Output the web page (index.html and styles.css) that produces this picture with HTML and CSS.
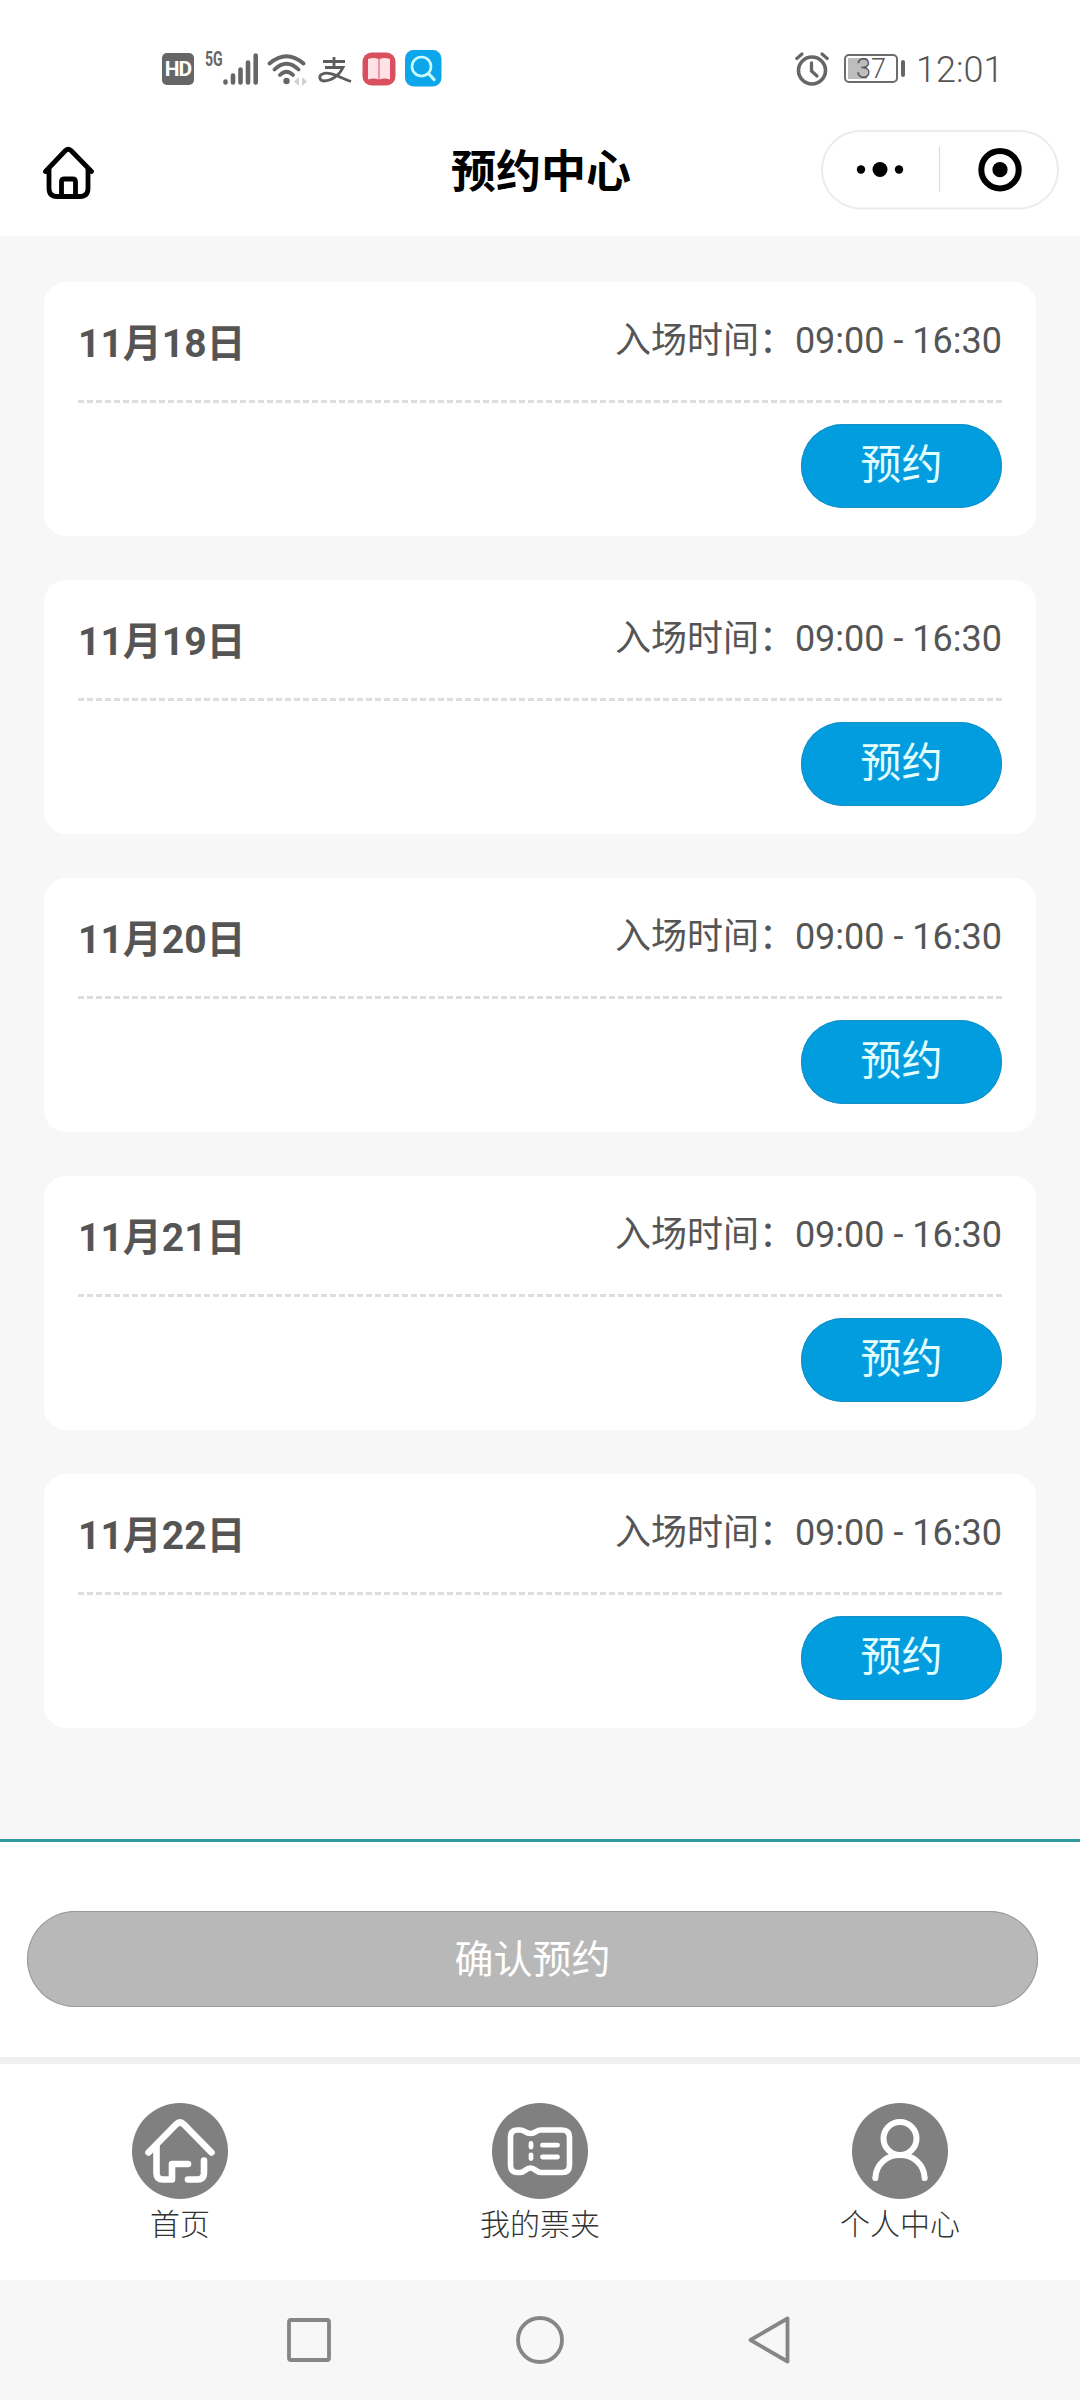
FILE: index.html
```html
<!DOCTYPE html>
<html lang="zh-CN">
<head>
<meta charset="utf-8">
<title>预约中心</title>
<link rel="stylesheet" href="styles.css">
</head>
<body>
<div class="statusbar">
  <div class="status-left">
    <span class="hd">HD</span>
    <span class="net">5G</span>
    <svg class="signal" width="36" height="36" viewBox="18 0 36 36">
      <g stroke="#666" stroke-width="4.600" stroke-linecap="round"><path d="M20.500 31.500v1M28 25.500v7M35.500 19.500v13M43 12.500v20M50.700 5.500v27"/></g>
    </svg>
    <svg class="wifi" width="40" height="36" viewBox="0 0 40 36">
      <g fill="none" stroke="#666" stroke-width="3.800" stroke-linecap="round"><path d="M2.500 13.500Q19.500-1 36.500 13.500M7.500 19.500Q19.500 8 31.500 19.500M13 25Q19.500 18.500 26 25"/></g>
      <circle cx="19.500" cy="31" r="3.200" fill="#666"/>
      <path d="M32 27v9l-5-4.500zM35 27v9l5-4.500z" fill="#d2d2d2"/>
    </svg>
    <svg class="pay" width="34" height="36" viewBox="0 0 34 36">
      <path d="M5 11.500H27M16 7V17M7 17.500H25C21 26 13 31 6 31C1 31 .5 25.500 4.500 24C11 21 21 27 33 31.500" fill="none" stroke="#5c5c5c" stroke-width="2.800"/>
    </svg>
    <svg class="book" width="34" height="36" viewBox="0 0 34 36">
      <rect x="0.500" y="2.500" width="33" height="33" rx="9" fill="#d94f5d"/>
      <path d="M6 9Q12 7 16.500 9V29.500Q12 27.500 6 29.500ZM17.500 9Q22 7 28 9V29.500Q22 27.500 17.500 29.500Z" fill="#ffe2e5"/>
    </svg>
    <svg class="search" width="37" height="37" viewBox="0 0 37 37">
      <rect x="0" y="0" width="36.500" height="36.500" rx="8.500" fill="#0ea6ea"/>
      <circle cx="16.500" cy="16.500" r="9.500" fill="none" stroke="#c9fbff" stroke-width="2.600"/>
      <path d="M23.500 23.500L29 29.500" stroke="#c9fbff" stroke-width="3.200" stroke-linecap="round"/>
    </svg>
  </div>
  <div class="status-right">
    <svg width="34" height="34" viewBox="0 0 34 34" fill="none" stroke="#666" stroke-linecap="round">
      <circle cx="17" cy="18.500" r="13.500" stroke-width="3.600"/>
      <path d="M16.500 11v8l5.500 5" stroke-width="3.300"/>
      <path d="M1.800 6.500L7 2M27 2l5.200 4.500" stroke-width="3.200"/>
    </svg>
    <div class="battery"><span class="cell">37</span><span class="nub"></span></div>
    <span class="clock">12:01</span>
  </div>
</div>

<header class="header">
  <svg class="home" width="52" height="54" viewBox="0 0 52 54" fill="none" stroke="#000" stroke-width="4.800" stroke-linecap="round" stroke-linejoin="round">
    <path d="M2.500 25.500L22.500 4.500Q25.200 2 28 4.500L48.500 25.500"/>
    <path d="M6 23V42Q6 50.500 14 50.500H37Q45 50.500 45 42V23M18.500 50V36Q18.500 33 21.500 33H29.500Q32.500 33 32.500 36V50"/>
  </svg>
  <h1 class="title">预约中心</h1>
  <svg class="capsule" width="238" height="80" viewBox="0 0 238 80">
    <rect x="1" y="1" width="236" height="77.500" rx="38.700" fill="#fff" stroke="#ececec" stroke-width="2"/>
    <path d="M118.500 17V62" stroke="#dcdcdc" stroke-width="1.200"/>
    <circle cx="40" cy="39.500" r="4.200"/><circle cx="59" cy="39.500" r="7.500"/><circle cx="78" cy="39.500" r="4.200"/>
    <circle cx="179" cy="39.700" r="18.700" fill="none" stroke="#000" stroke-width="6"/><circle cx="179" cy="39.700" r="7.600"/>
  </svg>
</header>

<main class="list">
  <section class="card">
    <div class="info"><h2 class="date">11月18日</h2><p class="time">入场时间：09:00 - 16:30</p></div>
    <button class="book-btn">预约</button>
  </section>
  <section class="card">
    <div class="info"><h2 class="date">11月19日</h2><p class="time">入场时间：09:00 - 16:30</p></div>
    <button class="book-btn">预约</button>
  </section>
  <section class="card">
    <div class="info"><h2 class="date">11月20日</h2><p class="time">入场时间：09:00 - 16:30</p></div>
    <button class="book-btn">预约</button>
  </section>
  <section class="card">
    <div class="info"><h2 class="date">11月21日</h2><p class="time">入场时间：09:00 - 16:30</p></div>
    <button class="book-btn">预约</button>
  </section>
  <section class="card">
    <div class="info"><h2 class="date">11月22日</h2><p class="time">入场时间：09:00 - 16:30</p></div>
    <button class="book-btn">预约</button>
  </section>
</main>

<div class="confirm"><button class="confirm-btn">确认预约</button></div>

<nav class="tabs">
  <a class="tab">
    <svg class="tab-icon" width="96" height="96" viewBox="0 0 96 96">
      <circle cx="48" cy="48" r="48" fill="#808080"/>
      <g fill="none" stroke="#fff" stroke-width="6.600" stroke-linecap="round" stroke-linejoin="round">
        <path d="M16.500 49.500L44 21.500Q48 17.500 52 21.500L79.500 49.500"/>
        <path d="M24.500 43V70Q24.500 76.500 31 76.500H40V61H56M72 57.500V70Q72 76.500 65.500 76.500H56"/>
      </g>
    </svg>
    <span>首页</span>
  </a>
  <a class="tab">
    <svg class="tab-icon" width="96" height="96" viewBox="0 0 96 96">
      <circle cx="48" cy="48" r="48" fill="#808080"/>
      <g fill="none" stroke="#fff" stroke-linecap="round" stroke-linejoin="round">
        <path stroke-width="5.600" d="M25 27H28C33 27 33 30.500 38.500 30.500S44 27 49 27H70Q77.500 27 77.500 34.500V62Q77.500 69.500 70 69.500H49C44 69.500 43.500 65 38.500 65S33 69.500 28 69.500H25Q18.500 69.500 18.500 62V34.500Q18.500 27 25 27Z"/>
        <path stroke-width="4.800" d="M39 40.500V44M39 52V55.500M50.500 42.200H65.500M50.500 54H65.500"/>
      </g>
    </svg>
    <span>我的票夹</span>
  </a>
  <a class="tab">
    <svg class="tab-icon" width="96" height="96" viewBox="0 0 96 96">
      <circle cx="48" cy="48" r="48" fill="#808080"/>
      <g fill="none" stroke="#fff" stroke-width="6" stroke-linecap="round">
        <circle cx="48" cy="35.500" r="16.500"/>
        <path d="M23.300 75C24 61 35 52 48 52S72 61 72.700 75"/>
      </g>
    </svg>
    <span>个人中心</span>
  </a>
</nav>

<div class="sysnav">
  <svg width="44" height="48" viewBox="0 0 44 48"><rect x="2" y="4" width="40" height="40" rx="2" fill="none" stroke="#868686" stroke-width="3.800"/></svg>
  <svg width="48" height="48" viewBox="0 0 48 48"><circle cx="24" cy="24" r="22" fill="none" stroke="#868686" stroke-width="3.800"/></svg>
  <svg width="42" height="48" viewBox="0 0 42 48"><path d="M39.500 2.500V45.500L2.500 24Z" fill="none" stroke="#868686" stroke-width="3.800" stroke-linejoin="round"/></svg>
</div>
</body>
</html>
```
FILE: styles.css
```css
* { box-sizing: border-box; }
body {
  margin: 0;
  width: 1080px;
  height: 2400px;
  display: flex;
  flex-direction: column;
  background: #f7f7f7;
  font-family: Roboto, "Noto Sans CJK SC", sans-serif;
  color: #555;
  overflow: hidden;
}
h1, h2, p { margin: 0; }
button { border: 0; padding: 0; font-family: inherit; color: #fff; display: block; }
svg { display: block; flex: none; }

.statusbar {
  height: 118px;
  background: #fff;
  display: flex;
  justify-content: space-between;
  align-items: flex-start;
  padding: 50px 78px 0 162px;
}
.status-left { display: flex; align-items: flex-start; }
.hd {
  width: 32px;
  height: 32px;
  margin-top: 3px;
  border-radius: 5px;
  background: #666;
  color: #fff;
  font: 700 21px/32px Roboto, sans-serif;
  letter-spacing: -1px;
  text-align: center;
}
.net {
  width: 18px;
  margin: -4px 0 0 11px;
  font: 700 21px/26px Roboto, sans-serif;
  color: #666;
  transform: scaleX(0.67);
  transform-origin: left top;
}
.wifi { margin-left: 8px; }
.pay { margin-left: 11px; }
.book { margin-left: 10px; }
.search { margin-left: 9px; }
.status-right { display: flex; align-items: flex-start; padding-top: 2px; }
.battery { display: flex; align-items: center; gap: 3px; margin: 2px 0 0 15px; }
.cell {
  width: 54px;
  height: 29px;
  border: 2px solid #6c6c6c;
  border-radius: 5px;
  background: linear-gradient(#bdbdbd, #bdbdbd) 2px center / 19px 21px no-repeat;
  font-size: 27px;
  font-weight: 300;
  line-height: 26px;
  text-align: center;
  color: #555;
}
.nub { width: 4px; height: 17px; border-radius: 2px; background: #666; }
.clock { margin: -3px 0 0 11px; font-size: 36px; font-weight: 300; line-height: 42px; color: #555; width: 86px; white-space: nowrap; }

.header {
  height: 118px;
  background: #fff;
  display: grid;
  grid-template-columns: 1fr auto 1fr;
  align-items: start;
  padding: 12px 21px 0 43px;
}
.home { margin-top: 16px; }
.title { font-size: 45px; line-height: 60px; color: #000; padding-top: 13px; margin-left: -20px; }
.capsule { justify-self: end; }

.list { height: 1603px; padding: 46px 44px 0; display: flex; flex-direction: column; gap: 44px; }
.card { height: 254px; background: #fff; border-radius: 22px; padding: 0 34px; display: flex; flex-direction: column; }
.info {
  height: 121px;
  border-bottom: 3px dashed #dedede;
  display: flex;
  justify-content: space-between;
  align-items: flex-start;
}
.date { font-size: 39px; line-height: 50px; font-weight: 700; padding-top: 37px; }
.time { font-size: 36px; line-height: 50px; padding-top: 34px; }
.book-btn {
  width: 201px;
  height: 84px;
  margin-top: 21px;
  align-self: flex-end;
  border-radius: 42px;
  background: #019ddf;
  box-shadow: inset 0 0 0 1px #168fc4;
  color: #e4ffff;
  font-size: 41px;
  line-height: 50px;
  padding-bottom: 3px;
}

.confirm { height: 218px; border-top: 3px solid #2f9b9e; background: #fff; padding: 69px 42px 0 27px; }
.confirm-btn {
  width: 100%;
  height: 96px;
  border-radius: 48px;
  background: #b8b8b8;
  box-shadow: inset 0 0 0 1px #999;
  font-size: 39px;
  padding-bottom: 7px;
}

.tabs {
  height: 223px;
  border-top: 7px solid #f1f1f1;
  background: #fff;
  display: grid;
  grid-template-columns: repeat(3, 1fr);
}
.tab { display: flex; flex-direction: column; align-items: center; padding-top: 39px; font-size: 30px; font-weight: 300; line-height: 40px; color: #333; }
.tab span { margin-top: 6px; }

.sysnav { height: 120px; display: flex; justify-content: space-between; padding: 36px 290px 0 287px; }
```
